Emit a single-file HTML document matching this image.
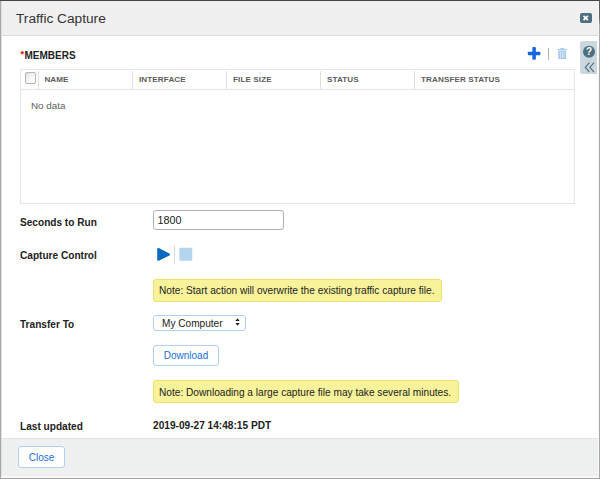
<!DOCTYPE html>
<html>
<head>
<meta charset="utf-8">
<title>Traffic Capture</title>
<style>
html,body{margin:0;padding:0;}
body{width:600px;height:479px;overflow:hidden;background:#a8a8a8;font-family:"Liberation Sans",Arial,Helvetica,sans-serif;font-size:12px;color:#333;position:relative;}
.abs{position:absolute;}
#dlg{left:1px;top:1px;width:598px;height:477px;background:#fff;}
#hdr{left:0;top:0;width:598px;height:34px;background:#f0f0f0;border-bottom:1px solid #dcdcdc;}
#title{left:15px;top:9px;font-size:13.7px;line-height:18px;color:#333;white-space:nowrap;}
#closex{left:579px;top:12px;width:12px;height:10px;background:#4d6f80;border-radius:2px;}
#lborder{left:0;top:0;width:1px;height:477px;background:#e0e0e0;}
#rborder{left:597px;top:0;width:1px;height:477px;background:#f7f7f7;}
#ftr{left:0;top:437px;width:598px;height:37px;background:#eff1f1;border-top:1px solid #e2e2e2;}
#bborder{left:0;top:475px;width:598px;height:2px;background:linear-gradient(#f4f4f4,#fdfdfd);}
.btn{background:#fff;border:1px solid #b0d0f6;border-radius:3px;color:#1a6fd8;font-size:10px;box-sizing:border-box;text-align:center;white-space:nowrap;}
#closebtn{left:17px;top:445px;width:47px;height:22px;line-height:21px;}
#members{left:19.5px;top:48px;font-size:10px;font-weight:bold;line-height:13px;color:#222;white-space:nowrap;}
#members span{color:#e00000;font-size:9px;vertical-align:top;position:relative;top:-1px;margin-right:0.5px;}
#tbl{left:19px;top:68px;width:555px;height:135px;box-sizing:border-box;border:1px solid #e6e6e6;background:#fff;}
#thead{left:0;top:0;width:553px;height:19px;border-bottom:1px solid #e4e4e4;}
.th{top:4px;font-size:8.1px;font-weight:bold;color:#5c5c5c;line-height:11px;white-space:nowrap;letter-spacing:0.1px;}
.sep{top:1px;width:1px;height:18px;background:#e0e0e0;}
#cb{left:4px;top:2px;width:11px;height:12px;box-sizing:border-box;border:1px solid #b4b4b4;border-radius:2px;background:linear-gradient(135deg,#dfe3ea,#fff 75%);}
#nodata{left:10px;top:29px;font-size:9.85px;line-height:14px;color:#606060;white-space:nowrap;}
.lbl{left:19px;font-size:10.1px;font-weight:bold;color:#222;line-height:13px;white-space:nowrap;}
#inp{left:152px;top:209px;width:131px;height:20px;box-sizing:border-box;border:1px solid #b0b0b0;border-radius:3px;background:#fff;font-size:10.8px;line-height:18px;padding-left:3.5px;color:#222;}
.note{left:152px;height:23px;box-sizing:border-box;background:#f8f29a;border:1px solid #ece36a;border-radius:3px;font-size:10.15px;line-height:21px;padding-left:5px;color:#222;white-space:nowrap;}
#sel{left:152px;top:314px;width:93px;height:16px;box-sizing:border-box;border:1px solid #b0d0f6;border-radius:3px;background:#fff;font-size:10.1px;line-height:15px;padding-left:8px;color:#222;white-space:nowrap;}
#dl{left:152px;top:344px;width:66px;height:21px;line-height:19px;}
#helptab{left:579px;top:40px;width:17px;height:33px;background:#ccd6dd;border-radius:3px 0 0 3px;}
</style>
</head>
<body>
<div class="abs" style="left:0;top:0;width:600px;height:1px;background:#444;"></div>
<div class="abs" style="left:599px;top:0;width:1px;height:479px;background:linear-gradient(#555 0,#666 18px,#a8a8a8 26px,#a8a8a8 100%);"></div>
<div class="abs" style="left:0;top:478px;width:600px;height:1px;background:#a4a4a4;"></div>
<div id="dlg" class="abs">
  <div id="hdr" class="abs"></div>
  <div id="title" class="abs">Traffic Capture</div>
  <div id="closex" class="abs">
    <svg width="12" height="10" viewBox="0 0 12 10" style="display:block"><path d="M3.5 2.8 L7.9 7.2 M7.9 2.8 L3.5 7.2" stroke="#fff" stroke-width="1.7" stroke-linecap="butt" fill="none"/></svg>
  </div>

  <div id="members" class="abs"><span>*</span>MEMBERS</div>

  <svg class="abs" style="left:526px;top:46px" width="15" height="14" viewBox="0 0 15 14"><rect x="0.8" y="4.65" width="12.6" height="3.5" rx="0.9" fill="#1566e0"/><rect x="5.35" y="0.1" width="3.5" height="12.6" rx="0.9" fill="#1566e0"/></svg>
  <div class="abs" style="left:547px;top:47px;width:1px;height:12px;background:#b5b0a0;"></div>
  <svg class="abs" style="left:556px;top:46px" width="11" height="13" viewBox="0 0 11 13"><rect x="0.4" y="1.9" width="9.6" height="0.9" fill="#9fc4e8"/><rect x="3.4" y="1.0" width="3.6" height="0.9" fill="#9fc4e8"/><path d="M1.3 3.4 H9.1 V11.2 Q9.1 12 8.3 12 H2.1 Q1.3 12 1.3 11.2 Z" fill="#a3c7ea"/><path d="M3.35 4.6 V10.9 M5.2 4.6 V10.9 M7.05 4.6 V10.9" stroke="#dfecf8" stroke-width="0.9"/></svg>

  <div id="tbl" class="abs">
    <div id="thead" class="abs"></div>
    <div id="cb" class="abs"></div>
    <div class="sep abs" style="left:17px"></div>
    <div class="th abs" style="left:23.4px">NAME</div>
    <div class="sep abs" style="left:111px"></div>
    <div class="th abs" style="left:118px">INTERFACE</div>
    <div class="sep abs" style="left:205px"></div>
    <div class="th abs" style="left:212px">FILE SIZE</div>
    <div class="sep abs" style="left:299px"></div>
    <div class="th abs" style="left:306px">STATUS</div>
    <div class="sep abs" style="left:393px"></div>
    <div class="th abs" style="left:400px">TRANSFER STATUS</div>
    <div id="nodata" class="abs">No data</div>
  </div>

  <div class="lbl abs" style="top:215px">Seconds to Run</div>
  <div id="inp" class="abs">1800</div>

  <div class="lbl abs" style="top:248px">Capture Control</div>
  <svg class="abs" style="left:156px;top:246px" width="15" height="16" viewBox="0 0 15 16"><path d="M1.3 2.1 L11.9 7.4 L1.3 12.7 Z" fill="#0d6abf" stroke="#0d6abf" stroke-width="2.2" stroke-linejoin="round"/></svg>
  <div class="abs" style="left:173px;top:244px;width:1px;height:18px;background:#ddd;"></div>
  <div class="abs" style="left:178px;top:247px;width:13px;height:13px;background:#b5d5ee;border-radius:1.5px;transform:translate(0.3px,-0.2px);"></div>

  <div id="note1" class="note abs" style="top:278px;width:289px;">Note: Start action will overwrite the existing traffic capture file.</div>

  <div class="lbl abs" style="top:317px">Transfer To</div>
  <div id="sel" class="abs">My Computer
    <svg class="abs" style="left:81.4px;top:2.3px" width="5" height="8" viewBox="0 0 6 9"><path d="M3 0 L5.6 3.4 H0.4 Z M3 9 L5.6 5.6 H0.4 Z" fill="#222"/></svg>
  </div>

  <div id="dl" class="btn abs">Download</div>

  <div id="note2" class="note abs" style="top:379px;width:306px;line-height:23px;">Note: Downloading a large capture file may take several minutes.</div>

  <div class="lbl abs" style="top:419px">Last updated</div>
  <div id="lastval" class="abs" style="left:152px;top:418px;font-size:10.13px;font-weight:bold;line-height:13px;color:#222;white-space:nowrap;">2019-09-27 14:48:15 PDT</div>

  <div id="helptab" class="abs">
    <svg width="17" height="33" viewBox="0 0 17 33" style="display:block">
      <circle cx="9" cy="10.7" r="6" fill="#4d6f80"/>
      <text x="9" y="14.3" font-family="Liberation Sans, Arial, sans-serif" font-size="10" font-weight="bold" fill="#fff" text-anchor="middle">?</text>
      <path d="M9.4 21.6 L5.3 26.4 L9.4 31.2 M14 21.6 L9.9 26.4 L14 31.2" stroke="#4d6f80" stroke-width="1.15" fill="none"/>
    </svg>
  </div>

  <div id="ftr" class="abs"></div>
  <div id="closebtn" class="btn abs">Close</div>
  <div id="lborder" class="abs"></div>
  <div id="rborder" class="abs"></div>
  <div id="bborder" class="abs"></div>
</div>
</body>
</html>
